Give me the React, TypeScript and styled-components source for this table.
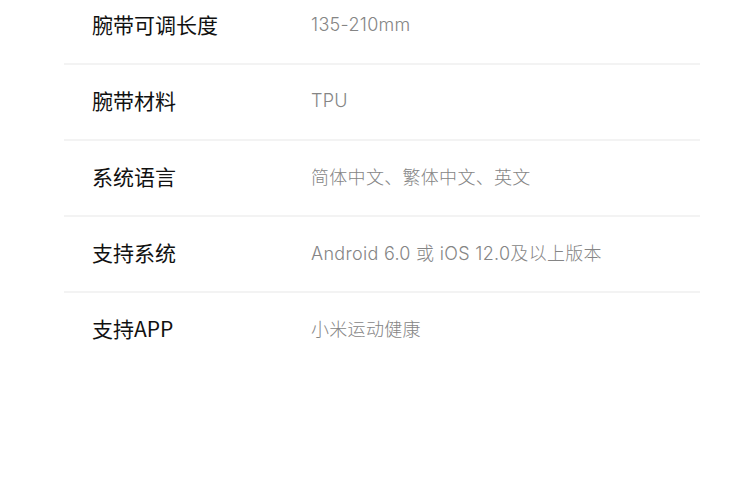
import React from 'react';
import styled, { createGlobalStyle } from 'styled-components';

const GlobalStyle = createGlobalStyle`
  html, body {
    margin: 0;
    padding: 0;
    background: #ffffff;
    overflow: hidden;
  }
  body {
    font-family: "Inter", "Noto Sans CJK SC", sans-serif;
  }
`;

const Page = styled.div`
  width: 750px;
  height: 493px;
  background: #ffffff;
  overflow: hidden;
`;

const SpecList = styled.ul`
  list-style: none;
  margin: -11px 0 0 0;
  padding: 0 50px 0 64px;
`;

const SpecRow = styled.li<{ last?: boolean }>`
  display: flex;
  align-items: center;
  height: 70px;
  padding-bottom: 4px;
  box-sizing: content-box;
  border-bottom: 2px solid ${(p) => (p.last ? 'transparent' : '#f3f3f3')};
`;

const Label = styled.span`
  width: 219px;
  padding-left: 28px;
  font-family: "Noto Sans CJK SC", sans-serif;
  font-size: 21px;
  font-weight: 400;
  color: #111111;
`;

const Value = styled.span`
  font-family: "Inter", "Noto Sans CJK SC", sans-serif;
  font-size: 18px;
  font-weight: 300;
  letter-spacing: 0.3px;
  color: #858585;
`;

const specs = [
  { label: '腕带可调长度', value: '135-210mm' },
  { label: '腕带材料', value: 'TPU' },
  { label: '系统语言', value: '简体中文、繁体中文、英文' },
  { label: '支持系统', value: 'Android 6.0 或 iOS 12.0及以上版本' },
  { label: '支持APP', value: '小米运动健康' },
];

export default function App() {
  return (
    <Page>
      <GlobalStyle />
      <SpecList>
        {specs.map((s, i) => (
          <SpecRow key={s.label} last={i === specs.length - 1}>
            <Label>{s.label}</Label>
            <Value>{s.value}</Value>
          </SpecRow>
        ))}
      </SpecList>
    </Page>
  );
}
